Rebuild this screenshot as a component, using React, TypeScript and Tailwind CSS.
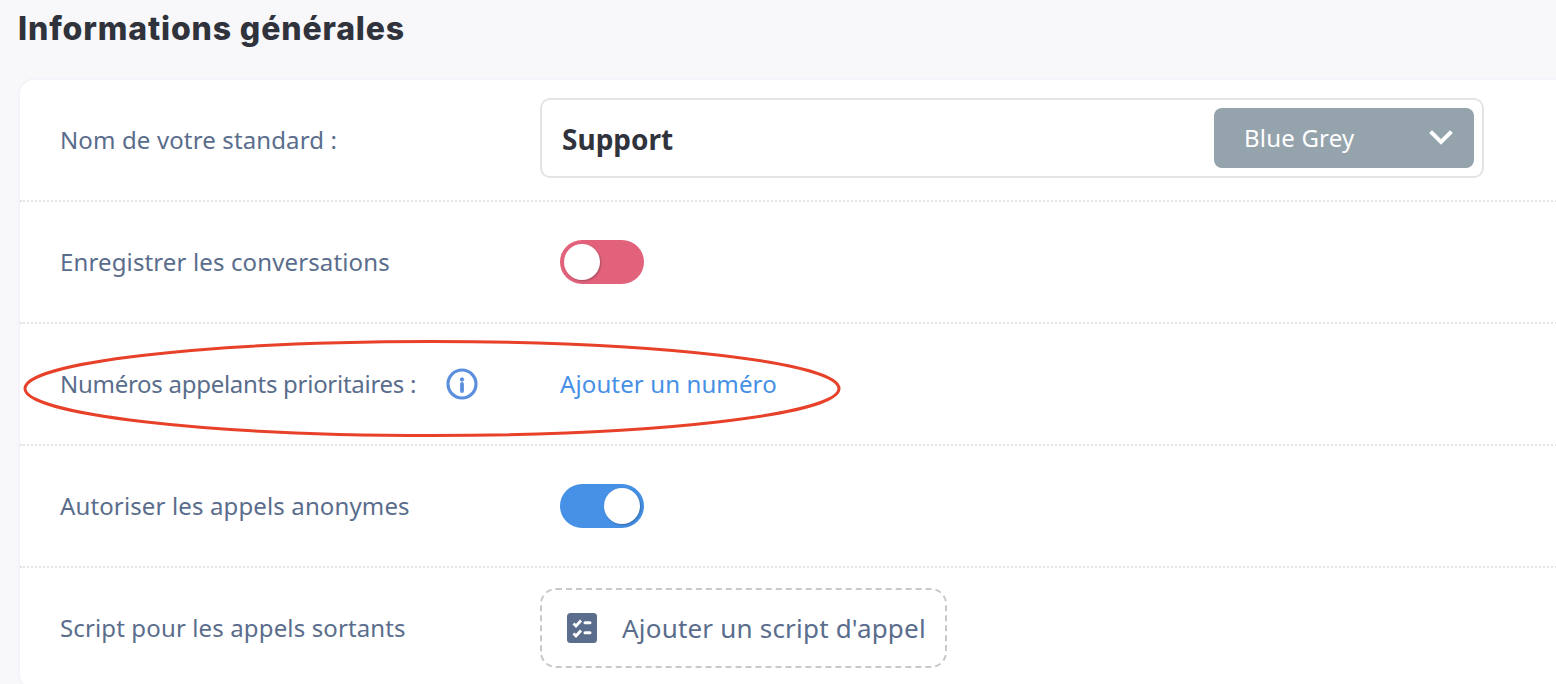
import React from "react";

function Row({ label, children, last }: { label: React.ReactNode; children: React.ReactNode; last?: boolean }) {
  return (
    <div className={`flex items-center ${last ? "h-[120px]" : "h-[122px] border-b-2 border-dotted border-[#e2e2e2]"}`}>
      <div className="w-[521px] flex-none pl-[40px] text-[24px] tracking-[0.13px] text-[#5a6d8c]">{label}</div>
      <div className="flex-1">{children}</div>
    </div>
  );
}

function Toggle({ on }: { on: boolean }) {
  return (
    <div className={`ml-[19px] flex h-[44px] w-[84px] items-center rounded-full px-[4px] ${on ? "justify-end bg-[#4690e6]" : "justify-start bg-[#e2627c]"}`}>
      <div className="h-[36px] w-[36px] rounded-full bg-white shadow-[1px_1px_2px_rgba(0,0,0,0.25)]" />
    </div>
  );
}

export default function App() {
  return (
    <div className="relative h-[684px] w-[1556px] overflow-hidden bg-[#f8f8fb] font-['Noto_Sans','Open_Sans',sans-serif]">
      <h1 className="pl-[18px] pt-[10px] font-['Inter',sans-serif] text-[32px] font-extrabold leading-[38px] tracking-[0.86px] text-[#30333c]">Informations générales</h1>
      <div className="ml-[18px] mt-[30px] w-[1600px] rounded-[16px] border-2 border-[#f3f3f9] bg-white">
        <Row label="Nom de votre standard :">
          <div className="-ml-px mb-[4px] flex h-[80px] w-[944px] items-center justify-between rounded-[10px] border-2 border-[#e4e4e4] pl-[20px] pr-[8px]">
            <span className="pt-[1px] text-[28px] font-bold text-[#30333c]">Support</span>
            <div className="flex h-[60px] w-[260px] items-center justify-between rounded-[8px] bg-[#95a3ad] pl-[30px] pr-[20px] text-[24px] tracking-[0.2px] text-white">
              <span>Blue Grey</span>
              <svg width="26" height="16" viewBox="0 0 26 16" fill="none" stroke="white" strokeWidth="4" strokeLinecap="square"><path d="M4 3l9 9 9-9" /></svg>
            </div>
          </div>
        </Row>
        <Row label="Enregistrer les conversations"><Toggle on={false} /></Row>
        <Row label={
          <span className="flex items-center gap-[29px] tracking-[-0.28px]">
            Numéros appelants prioritaires :
            <svg width="34" height="34" viewBox="0 0 34 34" fill="none" stroke="#5b8fde" strokeWidth="3.2"><circle cx="17" cy="17" r="14" /><path d="M17 17v7" strokeWidth="3.8" strokeLinecap="round" /><circle cx="17" cy="12.5" r="1.7" fill="#5b8fde" strokeWidth="1" /></svg>
          </span>
        }>
          <a className="ml-[19px] text-[24px] tracking-[0.12px] text-[#4690e6]">Ajouter un numéro</a>
        </Row>
        <Row label="Autoriser les appels anonymes"><Toggle on /></Row>
        <Row last label="Script pour les appels sortants">
          <div className="-ml-px flex h-[80px] w-[407px] items-center gap-[25px] rounded-[16px] border-2 border-dashed border-[#c8c8c8] pl-[25px] text-[26px] tracking-[0.2px] text-[#5a6d8c]">
            <svg width="30" height="30" viewBox="0 0 30 30"><rect width="30" height="30" rx="3.5" fill="#5a6d8c" /><path d="M6.5 10.5l2.5 2.5 5-5.5M6.5 20.5l2.5 2.5 5-5.5" fill="none" stroke="white" strokeWidth="2.8" /><path d="M18 9.7h5M18 19.7h5" stroke="white" strokeWidth="3" strokeLinecap="round" /></svg>
            <span>Ajouter un script d'appel</span>
          </div>
        </Row>
      </div>
      <svg className="pointer-events-none absolute left-0 top-0" width="1556" height="684" fill="none">
        <ellipse cx="432" cy="388.5" rx="407" ry="47" stroke="#e8412a" strokeWidth="3" />
      </svg>
    </div>
  );
}
